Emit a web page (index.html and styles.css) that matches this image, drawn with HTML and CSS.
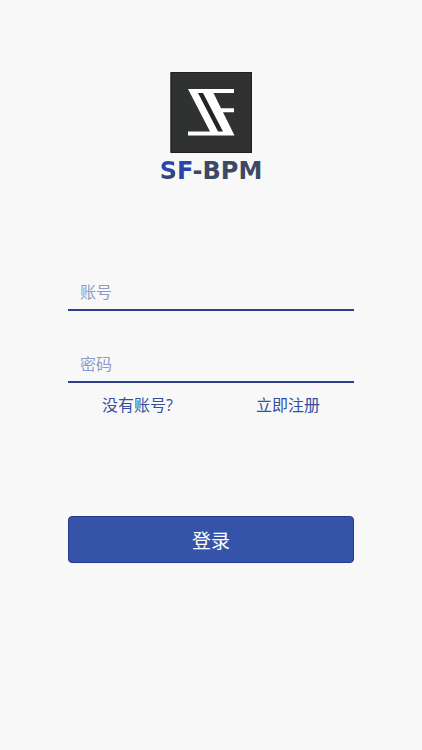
FILE: index.html
```html
<!DOCTYPE html>
<html lang="zh-CN">
<head>
<meta charset="utf-8">
<meta name="viewport" content="width=device-width, initial-scale=1">
<title>SF-BPM</title>
<link rel="stylesheet" href="styles.css">
</head>
<body>
<main class="login">
  <header class="brand">
    <svg class="brand-mark" viewBox="0 0 82 82" aria-hidden="true">
      <rect x="0.500" y="1" width="81.500" height="81" fill="#303232"/>
      <path d="M1 1.500H81.500V81.500H1Z" fill="none" stroke="#1f2020"/>
      <path fill="#fff" d="M18 18H64V22H43.500L51 37.200H64V41.200H53L64.500 64.500H18V60.500H40Z"/>
      <path fill="#242626" d="M28 22H33L53 60.500H48Z"/>
    </svg>
    <h1 class="brand-name"><span class="brand-s">S</span><span class="brand-f">F</span>-BPM</h1>
  </header>
  <form class="form">
    <input class="field" type="text" placeholder="账号" aria-label="账号">
    <input class="field" type="password" placeholder="密码" aria-label="密码">
    <div class="register">
      <span>没有账号?</span>
      <a href="#register">立即注册</a>
    </div>
    <button class="submit" type="submit">登录</button>
  </form>
</main>
</body>
</html>
```

FILE: styles.css
```css
* {
  box-sizing: border-box;
}

body {
  margin: 0;
  background: #f8f8f8;
  color: #3350a0;
  font-family: "Open Sans", "Noto Sans CJK SC", sans-serif;
  font-size: 16px;
  line-height: 24px;
}

.login {
  padding: 71px 68px 40px;
}

.brand {
  display: flex;
  flex-direction: column;
  align-items: center;
}

.brand-mark {
  display: block;
  width: 82px;
  height: 82px;
}

.brand-name {
  margin: 6px 0 0;
  color: #3a4964;
  font-family: "DejaVu Sans", sans-serif;
  font-size: 24px;
  font-weight: 700;
  line-height: 24px;
}

.brand-s {
  background: linear-gradient(#2846a8 50%, #34466e 60%);
  background-clip: text;
  color: transparent;
}

.brand-f {
  color: #2846a8;
}

.form {
  display: flex;
  flex-direction: column;
  margin-top: 88px;
}

.field {
  width: 100%;
  height: 40px;
  margin-bottom: 32px;
  padding: 4px 12px 0;
  border: 0;
  border-bottom: 2px solid #2b3f8c;
  border-radius: 0;
  outline: 0;
  background: transparent;
  color: #3350a0;
  font: inherit;
}

.field + .field {
  margin-bottom: 10px;
}

.field::placeholder {
  color: #8b9ccb;
  opacity: 1;
}

.register {
  display: flex;
  justify-content: space-between;
  padding: 0 34px;
}

.register a {
  color: inherit;
  text-decoration: none;
}

.submit {
  height: 47px;
  margin-top: 99px;
  padding: 2px 0 0;
  border: 1px solid #233b8c;
  border-radius: 4px;
  background: #3553a9;
  color: #fff;
  font: inherit;
  font-size: 19px;
}
```
